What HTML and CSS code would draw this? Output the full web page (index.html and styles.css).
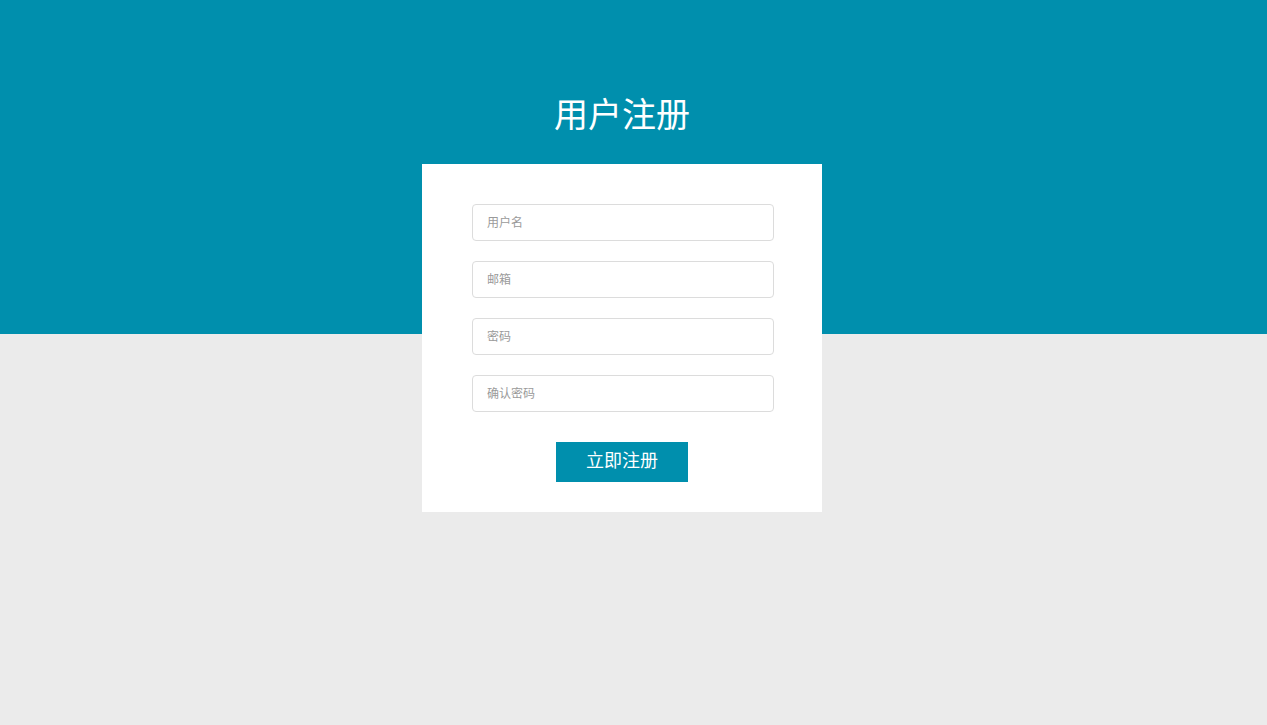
FILE: index.html
```html
<!DOCTYPE html>
<html lang="zh-CN">
<head>
<meta charset="utf-8">
<title>用户注册</title>
<link rel="stylesheet" href="styles.css">
</head>
<body>
<div class="page">
  <h1 class="title">用户注册</h1>
  <form class="card">
    <input class="field" type="text" placeholder="用户名">
    <input class="field" type="email" placeholder="邮箱">
    <input class="field" type="password" placeholder="密码">
    <input class="field" type="password" placeholder="确认密码">
    <button class="submit" type="button">立即注册</button>
  </form>
</div>
</body>
</html>
```

FILE: styles.css
```css
html, body {
  margin: 0;
  padding: 0;
  height: 100%;
}
body {
  background: #ebebeb;
  font-family: "Noto Sans CJK SC", "Noto Sans", sans-serif;
}
.page {
  min-height: 100%;
  background: linear-gradient(to bottom, #008fad 0, #008fad 334px, #ebebeb 334px);
  display: flex;
  flex-direction: column;
  align-items: center;
  padding: 95px 23px 0 0;
  box-sizing: border-box;
}
.title {
  margin: 0 0 34px;
  font-size: 34px;
  line-height: 35px;
  font-weight: normal;
  color: #ffffff;
}
.card {
  width: 400px;
  box-sizing: border-box;
  background: #ffffff;
  padding: 40px 48px 30px 50px;
  display: flex;
  flex-direction: column;
  align-items: center;
  gap: 20px;
}
.field {
  width: 302px;
  height: 37px;
  box-sizing: border-box;
  border: 1px solid #dcdcdc;
  border-radius: 4px;
  padding: 0 14px 2px;
  font-family: "Noto Sans CJK SC", sans-serif;
  font-size: 12px;
  color: #333;
  outline: none;
  margin: 0;
}
.field::placeholder {
  color: #9a9a9a;
}
.submit {
  margin: 10px 2px 0 0;
  width: 132px;
  height: 40px;
  border: none;
  background: #008fad;
  color: #ffffff;
  font-family: "Noto Sans CJK SC", sans-serif;
  font-size: 18px;
  padding: 0 0 6px;
  cursor: pointer;
}
```
